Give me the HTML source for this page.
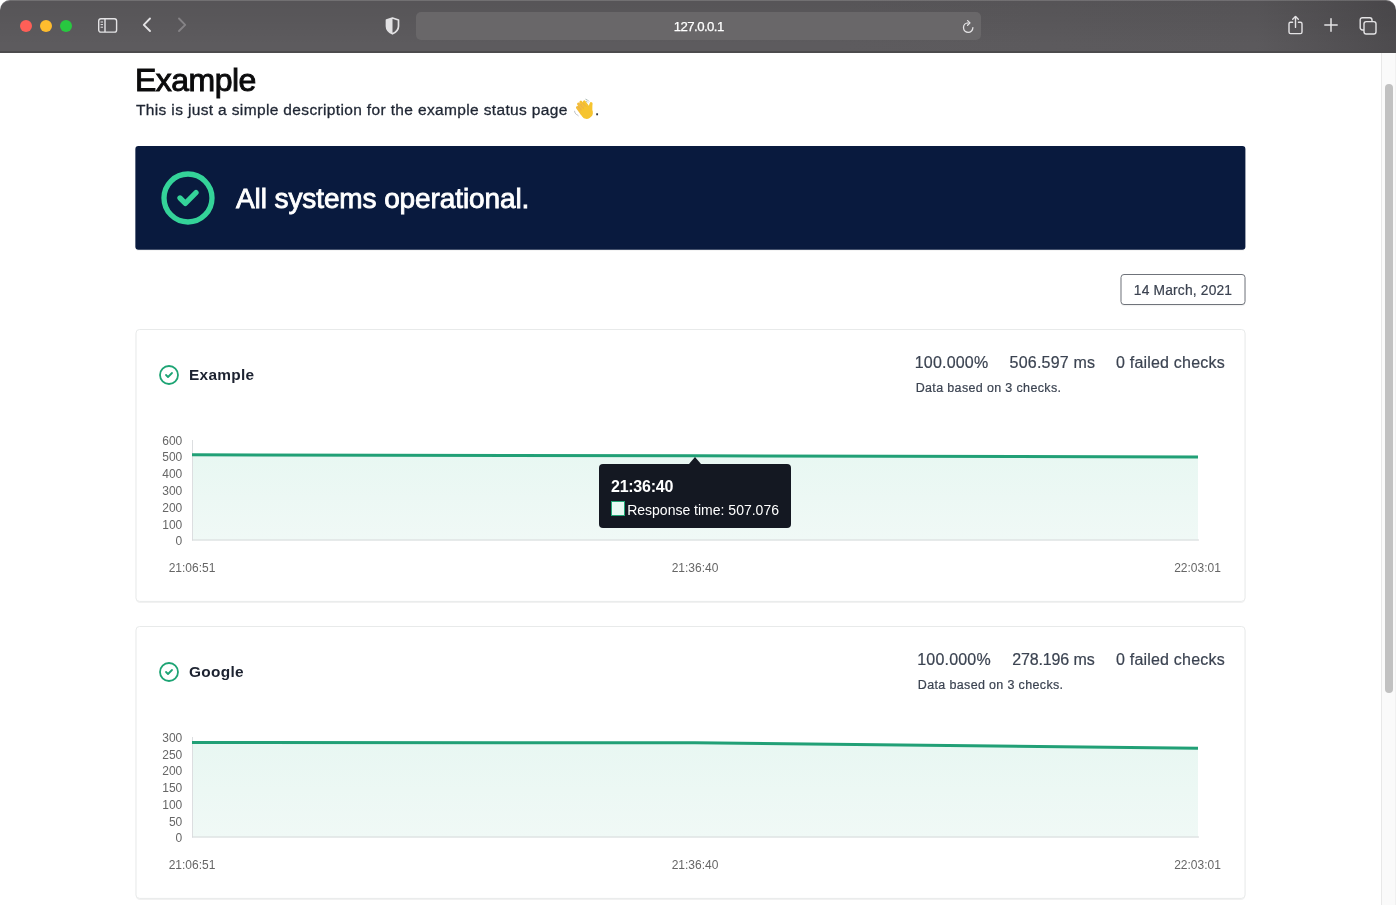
<!DOCTYPE html>
<html lang="en">
<head>
<meta charset="utf-8">
<title>Example</title>
<style>
  html, body { margin: 0; padding: 0; }
  body {
    width: 1396px; height: 905px; overflow: hidden; position: relative;
    background: #ffffff;
    font-family: "Liberation Sans", "DejaVu Sans", sans-serif;
    color: #1f2937;
    -webkit-font-smoothing: antialiased;
  }
  .abs { position: absolute; }
  /* ---------- browser chrome ---------- */
  #chrome {
    position: absolute; left: 0; top: 0; width: 1396px; height: 53px;
    border-radius: 10px 10px 0 0;
    background: linear-gradient(180deg, rgba(0,0,0,0.07) 0%, rgba(0,0,0,0.045) 40%, rgba(0,0,0,0) 85%), linear-gradient(90deg, #5d5b5e 0%, #5d5b5e 60%, #5b595c 90%, #4d4b4e 100%);
    box-shadow: inset 0 1px 0 rgba(255,255,255,0.16);
  }
  #chrome:after {
    content: ""; position: absolute; left: 0; right: 0; bottom: 0; height: 1.6px; background: #4c4b4d;
  }
  .light { position: absolute; top: 20px; width: 12px; height: 12px; border-radius: 50%; }
  #urlbar {
    position: absolute; left: 416px; top: 12px; width: 564.5px; height: 28px; border-radius: 5px;
    background: #696769;
  }
  #urltext {
    position: absolute; left: 416px; top: 12.2px; width: 565.5px; height: 28px; line-height: 29px;
    text-align: center; color: #ffffff; font-size: 13.2px; letter-spacing: -0.55px; -webkit-text-stroke: 0.25px #fff;
  }
  #chrome svg { position: absolute; overflow: visible; }
  /* ---------- scrollbar ---------- */
  #track { position: absolute; left: 1381px; top: 53px; width: 15px; height: 852px; background: #fafafa; border-left: 1px solid #e8e8e8; border-right: 1px solid #f1f1f1; box-sizing: border-box; }
  #thumb { position: absolute; left: 1385px; top: 84px; width: 8px; height: 609px; border-radius: 4px; background: #c1c1c1; }
  /* ---------- page ---------- */
  h1 {
    position: absolute; left: 135px; top: 60.6px; margin: 0; font-size: 32px; line-height: 38px; font-weight: 400;
    color: #0b0b0c; letter-spacing: -0.53px; -webkit-text-stroke: 0.95px #0b0b0c; white-space: nowrap;
  }
  #desc {
    position: absolute; left: 136px; top: 99.4px; margin: 0; font-size: 15.5px; line-height: 22px; color: #1f2633; white-space: nowrap;
    letter-spacing: 0.354px; -webkit-text-stroke: 0.3px #1f2633;
  }
  #banner { position: absolute; left: 135px; top: 146px; width: 1112px; height: 106px; }
  #banner .txt {
    position: absolute; left: 101px; top: 33.3px; font-size: 28px; line-height: 40px; color: #ffffff; white-space: nowrap;
    -webkit-text-stroke: 0.85px #ffffff; letter-spacing: -0.1px;
  }
  #datebtn {
    position: absolute; left: 1120px; top: 274px; width: 127px; height: 33px; color: #3b4250;
    font-size: 13.8px; line-height: 33.6px; letter-spacing: 0.18px;
  }
  #datebtn span { position: absolute; left: 0.5px; top: 0; width: 125px; text-align: center; white-space: nowrap; -webkit-text-stroke: 0.2px #3b4250; }
  .card { position: absolute; left: 135px; width: 1112px; height: 275px; }
  .card .name {
    position: absolute; left: 53.9px; top: 35.4px; letter-spacing: 0.33px; font-size: 15.4px; line-height: 22px; font-weight: 700; color: #1c2230; white-space: nowrap;
  }
  .card .stat { position: absolute; top: 23px; font-size: 16px; line-height: 22px; color: #3b4351; white-space: nowrap; letter-spacing: 0.2px; -webkit-text-stroke: 0.2px #3b4351; }
  .card .based { position: absolute; top: 49.5px; font-size: 12.5px; line-height: 18px; color: #3b4351; white-space: nowrap; letter-spacing: 0.35px; -webkit-text-stroke: 0.2px #3b4351; }
  .card svg.chart { position: absolute; left: 0; top: 0; }
  .yl { font-size: 12px; fill: #666666; text-anchor: end; font-family: "Liberation Sans", "DejaVu Sans", sans-serif; }
  .xl { font-size: 12px; fill: #666666; text-anchor: middle; font-family: "Liberation Sans", "DejaVu Sans", sans-serif; }
  /* tooltip */
  #tip { position: absolute; left: 599.3px; top: 464px; width: 191.8px; height: 63.7px; border-radius: 4px; background: #141822; }
  #tip:before { content: ""; position: absolute; left: 90.2px; top: -6.8px; border: 6px solid transparent; border-top: 0; border-bottom: 7px solid #141822; }
  #tip .t { position: absolute; left: 11.7px; top: 14.2px; font-size: 16px; letter-spacing: -0.25px; line-height: 18px; font-weight: 700; color: #fff; white-space: nowrap; }
  #tip .box { position: absolute; left: 11.7px; top: 37.3px; width: 14.4px; height: 15px; box-sizing: border-box; background: #e8faf3; border: 1px solid #21a675; }
  #tip .b { position: absolute; left: 27.9px; top: 36.7px; font-size: 14px; line-height: 18px; color: #fff; white-space: nowrap; }
</style>
</head>
<body>
<div id="root" style="position:absolute;left:0;top:0;width:1396px;height:905px;overflow:hidden;will-change:transform;">

<!-- ================= Browser chrome ================= -->
<div id="chrome">
  <div class="light" style="left:20px;background:#fe5f57;"></div>
  <div class="light" style="left:40px;background:#febc2e;"></div>
  <div class="light" style="left:60px;background:#28c840;"></div>

  <!-- sidebar icon -->
  <svg style="left:98px;top:18px" width="20" height="16" viewBox="0 0 20 16" fill="none" stroke="#e4e3e5" stroke-width="1.4">
    <rect x="0.7" y="0.7" width="17.9" height="13.4" rx="2.2"/>
    <line x1="7" y1="1" x2="7" y2="14"/>
    <line x1="2.6" y1="4" x2="5" y2="4" stroke-width="1"/>
    <line x1="2.6" y1="6.6" x2="5" y2="6.6" stroke-width="1"/>
    <line x1="2.6" y1="9.2" x2="5" y2="9.2" stroke-width="1"/>
  </svg>
  <!-- back -->
  <svg style="left:142px;top:17.4px" width="10" height="16" viewBox="0 0 10 16" fill="none" stroke="#e4e3e5" stroke-width="1.9" stroke-linecap="round" stroke-linejoin="round">
    <polyline points="8,1.5 1.8,7.8 8,14"/>
  </svg>
  <!-- forward -->
  <svg style="left:177px;top:17.4px" width="10" height="16" viewBox="0 0 10 16" fill="none" stroke="#858386" stroke-width="1.9" stroke-linecap="round" stroke-linejoin="round">
    <polyline points="2,1.5 8.2,7.8 2,14"/>
  </svg>
  <!-- shield -->
  <svg style="left:385.4px;top:17px" width="15" height="18" viewBox="0 0 15 18">
    <path d="M7.5 1 L13.5 3 V9.2 C13.5 12.6 10.9 15.2 7.5 16.8 C4.1 15.2 1.5 12.6 1.5 9.2 V3 Z" fill="none" stroke="#e2e1e3" stroke-width="1.7" stroke-linejoin="round"/>
    <path d="M7.5 1 L1.5 3 V9.2 C1.5 12.6 4.1 15.2 7.5 16.8 Z" fill="#e2e1e3"/>
  </svg>
  <div id="urlbar"></div>
  <div id="urltext">127.0.0.1</div>
  <!-- reload -->
  <svg style="left:961.8px;top:20px" width="13" height="14" viewBox="0 0 13 14" fill="none" stroke="#e4e3e5" stroke-width="1.3" stroke-linecap="round" stroke-linejoin="round">
    <path d="M10.9 7.6 A4.7 4.7 0 1 1 6.2 2.9"/>
    <polyline points="5.6,0.6 8,2.9 5.6,5.2"/>
  </svg>
  <!-- share -->
  <svg style="left:1288.4px;top:14.8px" width="15" height="20" viewBox="0 0 15 20" fill="none" stroke="#e4e3e5" stroke-width="1.4" stroke-linecap="round" stroke-linejoin="round">
    <path d="M4.6 7.2 H2.6 A1.6 1.6 0 0 0 1 8.8 V17 A1.6 1.6 0 0 0 2.6 18.6 H12.4 A1.6 1.6 0 0 0 14 17 V8.8 A1.6 1.6 0 0 0 12.4 7.2 H10.4"/>
    <line x1="7.5" y1="1.6" x2="7.5" y2="12.4"/>
    <polyline points="4.7,4.2 7.5,1.4 10.3,4.2"/>
  </svg>
  <!-- plus -->
  <svg style="left:1324px;top:18.4px" width="14" height="14" viewBox="0 0 14 14" fill="none" stroke="#e4e3e5" stroke-width="1.5" stroke-linecap="round">
    <line x1="7" y1="0.8" x2="7" y2="13.2"/><line x1="0.8" y1="7" x2="13.2" y2="7"/>
  </svg>
  <!-- tabs -->
  <svg style="left:1359px;top:17px" width="18" height="18" viewBox="0 0 18 18" fill="none" stroke="#e4e3e5" stroke-width="1.4" stroke-linejoin="round">
    <rect x="5" y="4.6" width="12" height="12.4" rx="2.2" fill="#535154"/>
    <path d="M5 13 H3.4 A2.2 2.2 0 0 1 1.2 10.8 V2.9 A2.2 2.2 0 0 1 3.4 0.7 H10.8 A2.2 2.2 0 0 1 13 2.9 V4.6"/>
  </svg>
</div>

<!-- ================= Scrollbar ================= -->
<div id="track"></div>
<div id="thumb"></div>

<!-- ================= Page ================= -->
<h1>Example</h1>
<p id="desc">This is just a simple description for the example status page <span style="display:inline-block;position:relative;width:22.6px;height:20px;vertical-align:-4px;"><span style="position:absolute;left:0;top:0;opacity:0;font-size:14px;">👋</span><svg style="position:absolute;left:2px;top:-2.3px" width="24" height="24" viewBox="0 0 24 24">
  <g transform="translate(11.6 14.2) rotate(-36)">
    <rect x="-5.9" y="-9.2" width="2.9" height="10" rx="1.45" fill="#f3bd3a"/>
    <rect x="-2.95" y="-11.4" width="2.9" height="12" rx="1.45" fill="#f3bd3a"/>
    <rect x="0" y="-11.6" width="2.9" height="12" rx="1.45" fill="#f5c033"/>
    <rect x="2.95" y="-9.8" width="2.9" height="10" rx="1.45" fill="#f6c42f"/>
    <rect x="-5.9" y="-4.2" width="11.8" height="12" rx="5.2" fill="#f6c42f"/>
    <path d="M-3 -8.5 V-3.4 M-0.05 -9.4 V-3.6 M2.9 -8.6 V-3.4" stroke="#e09a2e" stroke-width="0.75" fill="none" opacity="0.75"/>
  </g>
  <path d="M14.6 14.5 C14.3 11.2 14.8 8.2 15.8 5.9 a1.5 1.5 0 0 1 2.8 0.9 C18.1 9.4 18.6 12.2 18.2 15.4 Z" fill="#f6c42f"/>
  <path d="M2.2 17.4 q-1.5 -1.2 -1.7 -3.2 M4.2 18.8 q-1 -0.5 -1.5 -1.4" stroke="#b9bcc0" stroke-width="0.9" fill="none" stroke-linecap="round"/>
  <path d="M11.8 2.2 q1.9 0.3 3 2 M12.4 4.2 q0.9 0.3 1.4 1" stroke="#a9b8b4" stroke-width="0.9" fill="none" stroke-linecap="round"/>
</svg></span>.</p>

<div id="banner">
  <svg style="position:absolute;left:0;top:0" width="1112" height="106" viewBox="0 0 1112 106"><rect x="0.35" y="0.05" width="1110.05" height="103.75" rx="3" fill="#091a3e"/><rect x="2" y="103.8" width="1107" height="1" fill="#000" opacity="0.05"/></svg>
  <svg style="position:absolute;left:21px;top:20px" width="64" height="64" viewBox="0 0 24 24" fill="none" stroke="#34d399" stroke-width="2" stroke-linecap="round" stroke-linejoin="round">
    <path d="M9 12l2 2 4-4m6 2a9 9 0 11-18 0 9 9 0 0118 0z"/>
  </svg>
  <div class="txt">All systems operational.</div>
</div>

<div id="datebtn"><svg style="position:absolute;left:0;top:0" width="127" height="33" viewBox="0 0 127 33"><rect x="1.2" y="1.6" width="123.6" height="30" rx="3" fill="none" stroke="#000" stroke-opacity="0.05" stroke-width="1.4"/><rect x="1" y="0.5" width="124" height="30" rx="3" fill="#fff" stroke="#6f737a" stroke-width="1"/></svg><span>14 March, 2021</span></div>

<!-- ================= Card 1 ================= -->
<div class="card" style="top:329px;">
  <svg class="chart" width="1112" height="275" viewBox="135 329 1112 275">
    <rect x="136.5" y="330.2" width="1108" height="272" rx="3.5" fill="none" stroke="#000" stroke-opacity="0.055" stroke-width="1.6"/>
    <rect x="136" y="329.5" width="1109" height="271.9" rx="3.5" fill="#fff" stroke="#e8eaea" stroke-width="1"/>
    <defs>
      <linearGradient id="g1" x1="0" y1="0" x2="0" y2="1">
        <stop offset="0" stop-color="#e8f7f2"/><stop offset="1" stop-color="#f0f9f6"/>
      </linearGradient>
    </defs>
    <polygon points="192,454.8 695,455.8 1198,457 1198,540.5 192,540.5" fill="url(#g1)"/>
    <line x1="192.5" y1="440.0" x2="192.5" y2="540.5" stroke="#dcdee0" stroke-width="1"/>
    <line x1="192" y1="540.0" x2="1199" y2="540.0" stroke="#d6d8da" stroke-width="1"/>
    <polyline points="192,454.8 695,455.8 1198,457" fill="none" stroke="#21a076" stroke-width="3" stroke-linejoin="round"/>
    <text class="yl" x="182.3" y="444.7">600</text>
    <text class="yl" x="182.3" y="461.4">500</text>
    <text class="yl" x="182.3" y="478.2">400</text>
    <text class="yl" x="182.3" y="494.9">300</text>
    <text class="yl" x="182.3" y="511.7">200</text>
    <text class="yl" x="182.3" y="528.5">100</text>
    <text class="yl" x="182.3" y="545.2">0</text>
    <text class="xl" x="192" y="572">21:06:51</text>
    <text class="xl" x="695" y="572">21:36:40</text>
    <text class="xl" x="1197.5" y="572">22:03:01</text>
  </svg>
  <svg style="position:absolute;left:22px;top:34px" width="24" height="24" viewBox="0 0 24 24" fill="none" stroke="#1da474" stroke-width="1.8" stroke-linecap="round" stroke-linejoin="round">
    <path d="M9 12l2 2 4-4m6 2a9 9 0 11-18 0 9 9 0 0118 0z"/>
  </svg>
  <div class="name">Example</div>
  <div class="stat" style="left:779.7px;">100.000%</div>
  <div class="stat" style="left:874.6px;">506.597 ms</div>
  <div class="stat" style="left:981px;">0 failed checks</div>
  <div class="based" style="left:780.7px;">Data based on 3 checks.</div>

</div>

<!-- tooltip -->
<div id="tip">
  <div class="t">21:36:40</div>
  <div class="box"></div>
  <div class="b">Response time: 507.076</div>
</div>

<!-- ================= Card 2 ================= -->
<div class="card" style="top:626px;">
  <svg class="chart" width="1112" height="275" viewBox="135 626 1112 275">
    <rect x="136.5" y="627.2" width="1108" height="272" rx="3.5" fill="none" stroke="#000" stroke-opacity="0.055" stroke-width="1.6"/>
    <rect x="136" y="626.5" width="1109" height="271.9" rx="3.5" fill="#fff" stroke="#e8eaea" stroke-width="1"/>
    <defs>
      <linearGradient id="g2" x1="0" y1="0" x2="0" y2="1">
        <stop offset="0" stop-color="#e8f7f2"/><stop offset="1" stop-color="#f0f9f6"/>
      </linearGradient>
    </defs>
    <polygon points="192,742.4 695,742.8 1198,748.2 1198,837.5 192,837.5" fill="url(#g2)"/>
    <line x1="192.5" y1="737.0" x2="192.5" y2="837.5" stroke="#dcdee0" stroke-width="1"/>
    <line x1="192" y1="837.0" x2="1199" y2="837.0" stroke="#d6d8da" stroke-width="1"/>
    <polyline points="192,742.4 695,742.8 1198,748.2" fill="none" stroke="#21a076" stroke-width="3" stroke-linejoin="round"/>
    <text class="yl" x="182.3" y="741.7">300</text>
    <text class="yl" x="182.3" y="758.5">250</text>
    <text class="yl" x="182.3" y="775.2">200</text>
    <text class="yl" x="182.3" y="792.0">150</text>
    <text class="yl" x="182.3" y="808.7">100</text>
    <text class="yl" x="182.3" y="825.5">50</text>
    <text class="yl" x="182.3" y="842.2">0</text>
    <text class="xl" x="192" y="869">21:06:51</text>
    <text class="xl" x="695" y="869">21:36:40</text>
    <text class="xl" x="1197.5" y="869">22:03:01</text>
  </svg>
  <svg style="position:absolute;left:22px;top:34px" width="24" height="24" viewBox="0 0 24 24" fill="none" stroke="#1da474" stroke-width="1.8" stroke-linecap="round" stroke-linejoin="round">
    <path d="M9 12l2 2 4-4m6 2a9 9 0 11-18 0 9 9 0 0118 0z"/>
  </svg>
  <div class="name">Google</div>
  <div class="stat" style="left:782.2px;">100.000%</div>
  <div class="stat" style="left:877.2px;letter-spacing:-0.13px;">278.196 ms</div>
  <div class="stat" style="left:981px;">0 failed checks</div>
  <div class="based" style="left:782.8px;">Data based on 3 checks.</div>

</div>

</div>
</body>
</html>
